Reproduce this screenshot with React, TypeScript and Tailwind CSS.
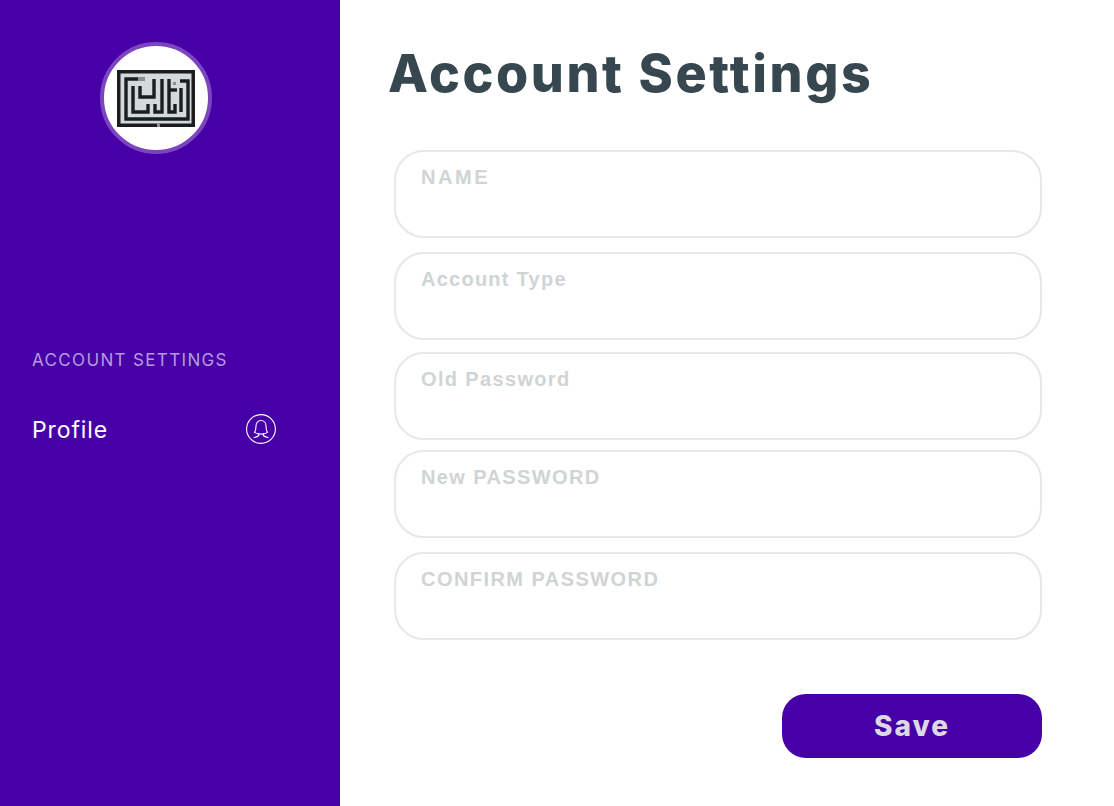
const fields = [
  { label: 'NAME', cls: 'mt-0', text: "font-['Inter',sans-serif] tracking-[2.6px]" },
  { label: 'Account Type', cls: 'mt-[14px]', text: 'tracking-[1.25px]' },
  { label: 'Old Password', cls: 'mt-[12px]', text: 'tracking-[1.35px]' },
  { label: 'New PASSWORD', cls: 'mt-[10px]', text: 'tracking-[1.38px]' },
  { label: 'CONFIRM PASSWORD', cls: 'mt-[14px]', text: 'tracking-[1.45px]' },
];

function Logo() {
  return (
    <svg width="78" height="57" viewBox="0 0 78 57">
      <rect width="78" height="57" fill="#1b1d1e" />
      <rect x="3.500" y="3.500" width="71" height="50" fill="#d3dadc" />
      <g fill="none" stroke="#1b1d1e" strokeWidth="3.4">
        <path d="M21 9H9V49H71V11H63" />
        <path d="M16 16V42H31V34" />
        <path d="M23 16V27H37V9" />
        <path d="M38 34V42H45V9" />
        <path d="M52 9V42H58V34" />
        <path d="M52 20H60" />
        <path d="M64 18V42" />
      </g>
      <rect x="21" y="7" width="7" height="4" fill="#8b9193" />
      <rect x="56" y="12" width="3" height="3" fill="#8b9193" />
      <rect x="40" y="53" width="3" height="4" fill="#8b9193" />
    </svg>
  );
}

function ProfileIcon() {
  return (
    <svg width="30" height="30" viewBox="0 0 30 30" fill="none" stroke="white" strokeWidth="1.1">
      <circle cx="15" cy="15" r="14.4" />
      <path d="M15 6.500c-3 0-5 2.300-5 5.400 0 3.200-.5 4.900-1.500 6.500 1.400 1 3 1.400 4.300 1.500v1.600c-1 1-3.300 1.700-5.300 2.200" />
      <path d="M15 6.500c3 0 5 2.300 5 5.400 0 3.200.5 4.900 1.500 6.500-1.400 1-3 1.400-4.300 1.500v1.600c1 1 3.300 1.700 5.300 2.200" />
      <path d="M12 20h6" />
    </svg>
  );
}

export default function App() {
  return (
    <div className="flex h-[806px] w-[1114px] overflow-hidden bg-white font-['Inter',sans-serif]">
      <aside className="flex w-[340px] shrink-0 flex-col bg-[#4700a8]">
        <div className="ml-[100px] mt-[42px] flex h-[112px] w-[112px] items-center justify-center rounded-full border-[4px] border-[#7b45bf] bg-white">
          <Logo />
        </div>
        <p className="ml-[32px] mt-[196px] text-[17px] leading-[20px] tracking-[1.35px] text-[#b79adf]">ACCOUNT SETTINGS</p>
        <div className="ml-[32px] mt-[44px] flex w-[244px] items-center justify-between">
          <span className="translate-y-[1px] text-[23px] leading-[28px] tracking-[0.9px] text-white">Profile</span>
          <ProfileIcon />
        </div>
      </aside>
      <main className="flex-1 pl-[48px] pt-[44px]">
        <h1 className="text-[52px] font-extrabold leading-[60px] tracking-[2.6px] text-[#37474f]">Account Settings</h1>
        <form className="ml-[6px] mt-[46px] flex w-[648px] flex-col">
          {fields.map((f) => (
            <div key={f.label} className={`h-[88px] rounded-[30px] border-2 border-[#e7e7e7] bg-white px-[25px] pt-[13px] ${f.cls}`}>
              <label className={`block font-['Liberation_Sans',sans-serif] text-[20px] font-bold leading-[24px] text-[#cfd4d5] ${f.text}`}>{f.label}</label>
            </div>
          ))}
          <div className="mt-[54px] flex justify-end">
            <button type="button" className="h-[64px] w-[260px] rounded-[24px] bg-[#4700a8] text-[28px] font-extrabold tracking-[2px] text-[#dcd8e4]">Save</button>
          </div>
        </form>
      </main>
    </div>
  );
}
